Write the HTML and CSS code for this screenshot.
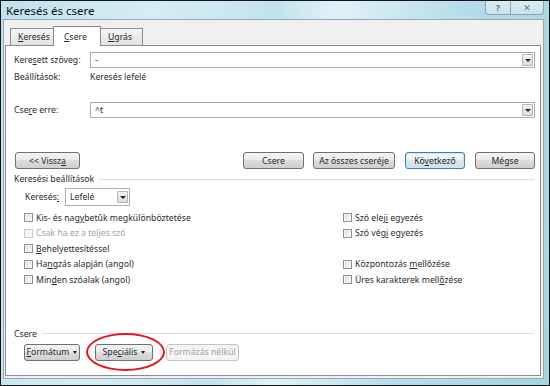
FILE: index.html
```html
<!DOCTYPE html>
<html lang="hu">
<head>
<meta charset="utf-8">
<link rel="stylesheet" href="styles.css">
</head>
<body>
<div class="window">
  <div class="titlebar">
    <span class="title">Keresés és csere</span>
    <div class="caption-btns">
      <span class="cb help">?</span>
      <span class="cb close">✕</span>
    </div>
  </div>
  <div class="client">
    <div class="tabs">
      <div class="tab"><span><u>K</u>eresés</span></div>
      <div class="tab active"><span><u>C</u>sere</span></div>
      <div class="tab"><span><u>U</u>grás</span></div>
    </div>
    <div class="panel">
      <div class="field-row">
        <span class="lbl">Kere<u>s</u>ett szöveg:</span>
        <div class="combo wide"><span class="val">-</span><span class="dd"></span></div>
      </div>
      <div class="info-row">
        <span class="lbl">Beállítások:</span>
        <span class="val">Keresés lefelé</span>
      </div>
      <div class="field-row csere-row">
        <span class="lbl">Cse<u>r</u>e erre:</span>
        <div class="combo wide"><span class="val">^t</span><span class="dd"></span></div>
      </div>
      <div class="btn-row">
        <button class="btn b-back"><span>&lt;&lt; Vissz<u>a</u></span></button>
        <span class="spacer"></span>
        <button class="btn b-csere"><span>Csere</span></button>
        <button class="btn b-all"><span>Az összes cseréje</span></button>
        <button class="btn b-next focus"><span>Kö<u>v</u>etkező</span></button>
        <button class="btn b-cancel"><span>Mégse</span></button>
      </div>
      <div class="section">
        <span class="sec-label">Keresési beállítások</span>
        <span class="line"></span>
      </div>
      <div class="dir-row">
        <span class="dir-lbl">Keresés<u>:</u></span>
        <div class="combo dir"><span class="val">Lefelé</span><span class="dd"></span></div>
      </div>
      <div class="opts">
        <label class="chk"><span class="box"></span><span>Kis- és nag<u>y</u>betűk megkülönböztetése</span></label>
        <label class="chk"><span class="box"></span><span>Szó elej<u>i</u> egyezés</span></label>
        <label class="chk disabled"><span class="box"></span><span>Csak ha ez a teljes szó</span></label>
        <label class="chk"><span class="box"></span><span>Szó vég<u>i</u> egyezés</span></label>
        <label class="chk"><span class="box"></span><span><u>B</u>ehelyettesítéssel</span></label>
        <span></span>
        <label class="chk"><span class="box"></span><span>Ha<u>n</u>gzás alapján (angol)</span></label>
        <label class="chk"><span class="box"></span><span>Központozás <u>m</u>ellőzése</span></label>
        <label class="chk"><span class="box"></span><span>Min<u>d</u>en szóalak (angol)</span></label>
        <label class="chk"><span class="box"></span><span>Üres karakterek mell<u>ő</u>zése</span></label>
      </div>
      <div class="section csere-sec">
        <span class="sec-label">Csere</span>
        <span class="line"></span>
      </div>
      <div class="bottom-btns">
        <button class="btn menu b-fmt"><span><u>F</u>ormátum</span><span class="arrow"></span></button>
        <span class="special-wrap">
          <button class="btn menu b-spec"><span>Spe<u>c</u>iális</span><span class="arrow"></span></button>
          <span class="ring"></span>
        </span>
        <button class="btn b-nofmt" disabled><span>Formázás nélkül</span></button>
      </div>
    </div>
  </div>
</div>
</body>
</html>
```
FILE: styles.css
```css
* { box-sizing: border-box; }
html, body { margin: 0; padding: 0; background: #fff; }
body { width: 550px; height: 386px; overflow: hidden; font-family: "Noto Sans", "DejaVu Sans", sans-serif; font-size: 8.7px; color: #2a2a2a; }
u { text-decoration: underline; text-underline-offset: 1px; }

.window {
  width: 550px; height: 386px;
  border: 1px solid #151515;
  background: linear-gradient(100deg, #bfe1ec 0%, #d6edf4 25%, #c2e3ec 45%, #e0f2f7 55%, #b5dde8 75%, #a6d5e1 100%);
  display: flex; flex-direction: column;
  padding: 0 5px 6px 2px;
}
.titlebar { height: 18px; display: flex; align-items: flex-start; }
.title { font-size: 11.5px; padding: 2px 0 0 3px; color: #111; font-family: "Noto Sans", sans-serif; }
.caption-btns { margin-left: auto; display: flex; }
.cb {
  height: 14px; display: flex; align-items: center; justify-content: center;
  border: 1px solid #8ba6b3; border-top: none;
  background: linear-gradient(#dcecf2, #c9e2ea);
  color: #6b7c85; font-size: 9px; font-weight: bold;
}
.help { width: 26px; border-radius: 0 0 0 4px; }
.close { width: 33px; border-left: none; border-radius: 0 0 4px 0; font-size: 9px; }

.client {
  flex: 1; display: flex; flex-direction: column;
  background: #f0f0f0; border: 1px solid #9aa7b0;
  padding: 6px 2px 2px 1px;
}
.tabs { display: flex; height: 19px; align-items: flex-end; padding-left: 5px; position: relative; z-index: 1; }
.tab {
  height: 17px; padding: 0 7px; display: flex; align-items: center;
  border: 1px solid #898c95; border-bottom: none; margin-right: -1px;
  background: linear-gradient(#f6f6f6, #e2e2e2);
}
.tab:first-child { width: 44px; }
.tab.active { height: 20px; margin-bottom: -1px; background: #fff; width: 48px; padding-left: 10px; }
.tab:last-child { width: 43px; }

.panel {
  flex: 1; background: #fff; border: 1px solid #898c95;
  padding: 6px 5px 0 8px; display: flex; flex-direction: column;
}
.field-row { display: flex; align-items: center; height: 16px; }
.lbl { width: 76px; flex: none; }
.combo {
  display: flex; align-items: center; height: 16px;
  border: 1px solid #abadb3; border-top-color: #a5a7ad; background: #fff;
  padding: 0 1px 0 4px;
}
.combo.wide { flex: 1; }
.combo .val { flex: 1; }
.dd {
  width: 11px; height: 12px; border: 1px solid #b5b5b5; border-radius: 1px;
  background: linear-gradient(#f5f5f5, #dcdcdc); position: relative;
}
.dd::after {
  content: ""; position: absolute; left: 2px; top: 4px;
  border-left: 3px solid transparent; border-right: 3px solid transparent; border-top: 3px solid #222;
}
.info-row { display: flex; height: 16px; align-items: center; margin-top: 1px; }
.csere-row { margin-top: 17px; }

.btn-row { display: flex; align-items: center; margin-top: 34px; height: 17px; padding-left: 1px; }
.spacer { flex: 1; }
.btn {
  font: inherit; color: #2a2a2a; height: 17px; padding: 0;
  border: 1px solid #707070; border-radius: 3px;
  background: linear-gradient(#f3f3f3 0%, #ebebeb 45%, #dddddd 50%, #cfcfcf 100%);
  display: flex; align-items: center; justify-content: center;
}
.b-back { width: 65px; }
.b-csere { width: 61px; }
.b-all { width: 82px; margin-left: 9px; }
.b-next { width: 60px; margin-left: 10px; }
.b-cancel { width: 60px; margin-left: 10px; }
.btn.focus { border-color: #3c7fb1; background: linear-gradient(#f4f8fb 0%, #eaf0f4 45%, #dde6ec 50%, #d3dee6 100%); box-shadow: inset 0 0 0 1px #cfe6f5; }

.section { display: flex; align-items: center; height: 12px; margin-top: 4px; }
.sec-label { flex: none; padding-right: 5px; }
.line { flex: 1; height: 1px; background: #dcdcdc; margin-right: 1px; }

.dir-row { display: flex; align-items: center; margin-top: 3px; height: 18px; padding-left: 11px; }
.dir-lbl { width: 40px; }
.combo.dir { width: 65px; height: 18px; border-color: #abadb3; }

.opts {
  display: grid; grid-template-columns: 319px 1fr; grid-auto-rows: 15.5px;
  margin-top: 4px; padding-left: 10px;
}
.chk { display: flex; align-items: center; }
.box {
  width: 9px; height: 9px; border: 1px solid #8f8f8f; margin-right: 3px; flex: none;
  background: linear-gradient(135deg, #dcdcdc, #fbfbfb);
  box-shadow: inset 0 0 0 1px #f4f4f4;
}
.chk.disabled { color: #a3a3a3; }
.chk.disabled .box { border-color: #c9c9c9; background: #f6f6f6; }

.csere-sec { margin-top: 40px; }

.bottom-btns { display: flex; align-items: center; margin-top: 4px; padding-left: 10px; height: 17px; }
.btn.menu { gap: 4px; }
.arrow { border-left: 2.5px solid transparent; border-right: 2.5px solid transparent; border-top: 3px solid #222; }
.b-fmt { width: 56px; }
.special-wrap { position: relative; margin-left: 15px; }
.b-spec { width: 58px; }
.ring {
  position: absolute; left: -9px; top: -11px; width: 79px; height: 38px;
  border: 2px solid #e8141c; border-radius: 50%; pointer-events: none;
}
.b-nofmt { width: 73px; margin-left: 13px; color: #a3a3a3; border-color: #c3c3c3; background: #f4f4f4; }
```
